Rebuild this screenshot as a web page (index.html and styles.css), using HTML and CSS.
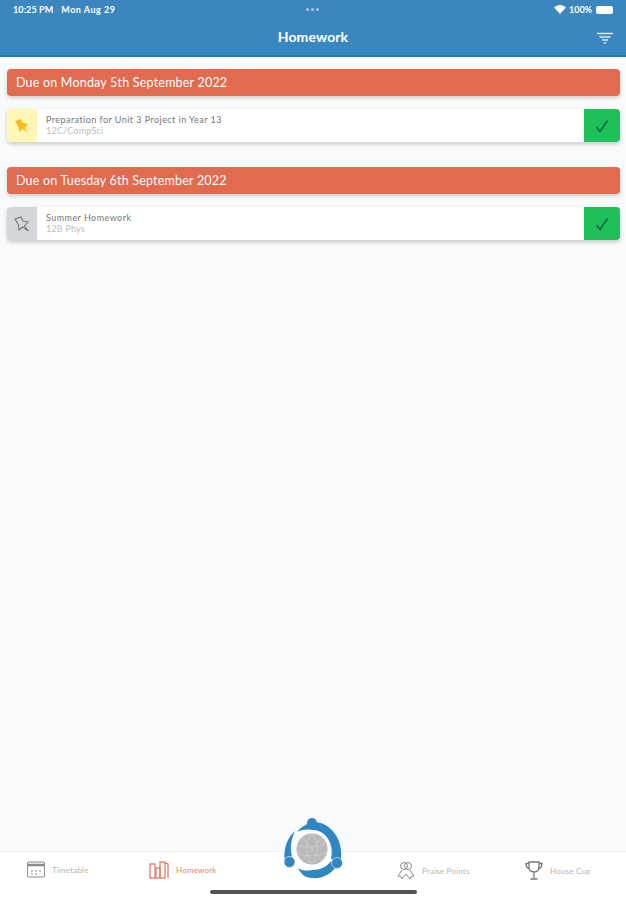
FILE: index.html
```html
<!DOCTYPE html>
<html lang="en">

<head>
    <meta charset="UTF-8">
    <meta name="viewport" content="width=device-width, initial-scale=1.0">
    <title>Homework</title>
    <link rel="stylesheet" href="styles.css">
</head>

<body>
    <div class="app">
        <header class="header">
            <div class="status">
                <span class="status-time">10:25 PM</span>
                <span class="status-date">Mon Aug 29</span>
                <span class="status-dots"><i></i><i></i><i></i></span>
                <span class="status-right">
                    <svg width="12" height="9" viewBox="0 0 12 9"><path d="M6 9 0 2.600C3.400-.8 8.600-.8 12 2.600z" fill="#fff"/></svg>
                    <span>100%</span>
                    <span class="battery"></span>
                </span>
            </div>
            <div class="title-row">
                <h1>Homework</h1>
                <svg class="filter" width="16" height="12" viewBox="0 0 16 12">
                    <path d="M0 1.500h16M2.500 5h11M5 8h6M6.800 11h2.400" stroke="#dbe8f2" stroke-width="1.700" fill="none"/>
                </svg>
            </div>
        </header>

        <main class="content">
            <section class="group">
                <h2 class="due">Due on Monday 5th September 2022</h2>
                <div class="card">
                    <div class="pin pin-on">
                        <svg width="16" height="16" viewBox="0 0 16 16"><path d="M1 3 7 1 9 5 14 6 10.500 10 14.500 15 8.500 11 5 14 4.500 9z" fill="#f5bd16"/></svg>
                    </div>
                    <div class="card-text">
                        <div class="card-title">Preparation for Unit 3 Project in Year 13</div>
                        <div class="card-sub">12C/CompSci</div>
                    </div>
                    <div class="done">
                        <svg width="14" height="14" viewBox="0 0 14 14"><path d="M1.500 8 5 12.500 12.500 1.500" stroke="#14703a" stroke-width="1.700" fill="none"/></svg>
                    </div>
                </div>
            </section>
            <section class="group">
                <h2 class="due">Due on Tuesday 6th September 2022</h2>
                <div class="card">
                    <div class="pin">
                        <svg width="16" height="16" viewBox="0 0 16 16"><path d="M1 3 7 1 9 5 14 6 10.500 10 14.500 15 8.500 11 5 14 4.500 9z" stroke="#73787d" stroke-width="1.100" fill="none"/></svg>
                    </div>
                    <div class="card-text">
                        <div class="card-title">Summer Homework</div>
                        <div class="card-sub">12B Phys</div>
                    </div>
                    <div class="done">
                        <svg width="14" height="14" viewBox="0 0 14 14"><path d="M1.500 8 5 12.500 12.500 1.500" stroke="#14703a" stroke-width="1.700" fill="none"/></svg>
                    </div>
                </div>
            </section>
        </main>

        <nav class="tabs">
            <div class="tab tab-timetable">
                <svg width="18" height="17" viewBox="0 0 18 17" fill="none" stroke="#8b8b8b"><rect x=".5" y="1" width="17" height="15" rx="1"/><path d="M.5 4h17" stroke-width="2.500"/><path d="M4 10h2M8 10h2M12 10h2M4 13h2M8 13h2" stroke-width="1.200"/></svg>
                <span>Timetable</span>
            </div>
            <div class="tab tab-homework active">
                <svg width="20" height="18" viewBox="0 0 20 18" fill="none" stroke="#e0735a" stroke-width="1.200"><rect x="1" y="3" width="5" height="14"/><rect x="7" y="7" width="4" height="10"/><rect x="11" y="1" width="5" height="16"/><path d="M16 2 19 3V17"/></svg>
                <span>Homework</span>
            </div>
            <div class="tab tab-praise">
                <svg width="18" height="19" viewBox="0 0 18 19" fill="none" stroke="#8b8b8b"><circle cx="7" cy="5" r="3.500"/><circle cx="11" cy="5" r="3.500"/><path d="M5 9 1 15l3 .5 1 2.500 4-5 4 5 1-2.500 3-.5-4-6"/></svg>
                <span>Praise Points</span>
            </div>
            <div class="tab tab-cup">
                <svg width="18" height="19" viewBox="0 0 18 19" fill="none" stroke="#777"><path d="M4 1h10V6c0 3-2 5-5 5S4 9 4 6zM4 2.500H1C1 6 2.500 7.500 5 8M14 2.500h3C17 6 15.500 7.500 13 8M9 11v6M5.500 18h7" stroke-width="1.300"/></svg>
                <span>House Cup</span>
            </div>
        </nav>

        <svg class="logo" width="60" height="62" viewBox="0 0 60 62">
            <path d="M13 15C17 10 22 7 28 5 46 4 60 22 57 44L47 42C51 27 41 12 28 13 22 12 17 13 13 15z" fill="#2f86c1"/>
            <path d="M52 50C46 58 37 62 28 61 21 61 17 57 14 51 18 54 23 54 28 53 36 53 43 50 47 44z" fill="#2f86c1"/>
            <path d="M11 14C2 22-1 34 1 46L9 44C6 33 6 24 11 14z" fill="#2f86c1"/>
            <circle cx="28" cy="6" r="5" fill="#2f86c1"/>
            <circle cx="5.500" cy="45" r="5.500" fill="#2f86c1" stroke="#fff" stroke-width=".6"/>
            <circle cx="53" cy="46" r="5.500" fill="#2f86c1" stroke="#fff" stroke-width=".6"/>
            <circle cx="28" cy="32" r="15.500" fill="#b9b9b9"/>
            <path d="M13.500 28C22 31 34 31 42 26M13 36C22 40 34 40 43 35M28 16.500C21 24 21 40 28 47.500M28 16.500C35 24 35 40 28 47.500M18 20 38 44M38 20 18 44" stroke="#cfcfcf" stroke-width=".8" fill="none"/>
        </svg>
        <div class="home-bar"></div>
    </div>
</body>

</html>
```

FILE: styles.css
```css
* {
    box-sizing: border-box;
}

body {
    margin: 0;
    font-family: Lato, "Open Sans", sans-serif;
    background-color: #f8fafc;
}

.app {
    position: relative;
    width: 626px;
    height: 900px;
    display: flex;
    flex-direction: column;
    overflow: hidden;
}

.header {
    height: 57px;
    background-color: #3a87bf;
    border-bottom: 2px solid #2379b6;
    color: white;
}

.status {
    height: 18px;
    padding: 1px 13px 0 13px;
    display: flex;
    align-items: center;
    position: relative;
    font-size: 9px;
    font-weight: 700;
}

.status-time {
    letter-spacing: .1px;
}

.status-date {
    margin-left: 8px;
    letter-spacing: .5px;
}

.status-dots {
    position: absolute;
    left: 306px;
    top: 8px;
    display: flex;
    gap: 2px;
}

.status-dots i {
    width: 3px;
    height: 3px;
    border-radius: 50%;
    background-color: #a9cde6;
}

.status-right {
    margin-left: auto;
    display: flex;
    align-items: center;
    gap: 3px;
}

.battery {
    width: 17px;
    height: 8px;
    margin-left: 1px;
    border-radius: 2px;
    background-color: white;
}

.title-row {
    height: 37px;
    display: flex;
    align-items: center;
    justify-content: center;
    position: relative;
}

h1 {
    margin: 0;
    font-size: 14px;
    font-weight: 700;
    letter-spacing: .1px;
}

.filter {
    position: absolute;
    right: 13px;
    top: 14px;
}

.content {
    flex: 1;
    padding: 12px 6px 0 7px;
}

.group {
    margin-bottom: 25px;
}

.due {
    margin: 0 0 13px;
    height: 27px;
    padding: 0 9px;
    display: flex;
    align-items: center;
    background-color: #e26a4f;
    border-radius: 4px;
    box-shadow: 0 2px 4px rgba(0, 0, 0, 0.18);
    color: #fff;
    font-size: 12.500px;
    font-weight: 400;
    letter-spacing: .2px;
}

.card {
    height: 33px;
    display: flex;
    background-color: white;
    border-radius: 4px;
    box-shadow: 0 2px 4px rgba(0, 0, 0, 0.2);
    overflow: hidden;
}

.pin {
    width: 30px;
    display: flex;
    align-items: center;
    justify-content: center;
    background-color: #d3d7dc;
}

.pin-on {
    background-color: #fff6b8;
}

.card-text {
    flex: 1;
    padding: 5px 0 0 9px;
    font-size: 9px;
    line-height: 11px;
}

.card-title {
    color: #777;
    letter-spacing: .45px;
}

.card-sub {
    color: #bdbdbd;
    letter-spacing: .2px;
}

.done {
    width: 36px;
    display: flex;
    align-items: center;
    justify-content: center;
    background-color: #1fbf5a;
}

.tabs {
    height: 49px;
    background-color: white;
    border-top: 1px solid #f0f1f2;
    position: relative;
    display: flex;
}

.tab {
    position: absolute;
    top: 9px;
    display: flex;
    align-items: center;
    gap: 7px;
    font-size: 8px;
    letter-spacing: .2px;
    color: #b5b5b5;
}

.tab-timetable {
    left: 27px;
}

.tab-homework {
    left: 149px;
}

.tab-praise {
    left: 397px;
}

.tab-cup {
    left: 525px;
}

.active {
    color: #e8836b;
}

.logo {
    position: absolute;
    left: 284px;
    top: 817px;
}

.home-bar {
    position: absolute;
    left: 210px;
    top: 890px;
    width: 207px;
    height: 4px;
    border-radius: 2px;
    background-color: #555;
}
```
